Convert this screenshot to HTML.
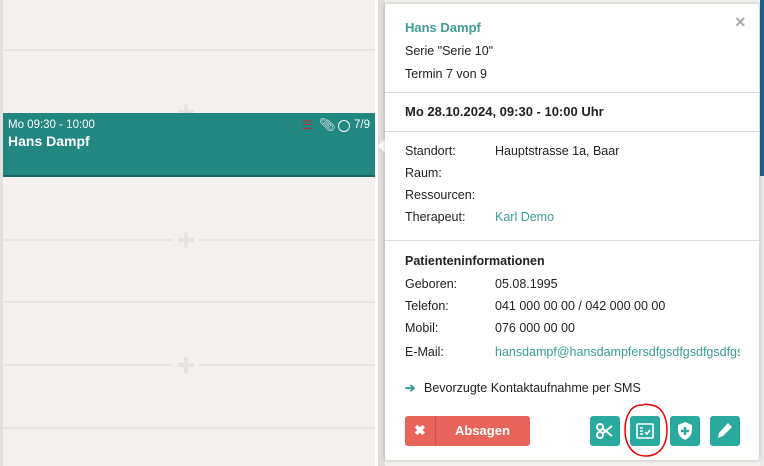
<!DOCTYPE html>
<html><head><meta charset="utf-8"><style>
*{margin:0;padding:0;box-sizing:border-box}
body{width:764px;height:466px;overflow:hidden;background:#f4f1ee;font-family:"Liberation Sans",sans-serif;font-size:12.5px;color:#222;position:relative}
.a{position:absolute}
.hl{position:absolute;left:3px;width:372px;height:2px;background:#e8e5e2}
.plus{position:absolute;width:26px;height:20px;background:#f4f1ee}
.plus:before{content:"";position:absolute;left:5px;top:8px;width:16px;height:4px;background:#e6e3e0}
.plus:after{content:"";position:absolute;left:11px;top:2px;width:4px;height:16px;background:#e6e3e0}
.pop{position:absolute;left:385px;top:4px;width:374px;height:456px;background:#fff;border-radius:3px;box-shadow:0 0 4px rgba(0,0,0,.25)}
.t{position:absolute;white-space:nowrap}
.div{position:absolute;left:0;width:374px;height:1px;background:#ddd}
.btn{position:absolute;top:412px;width:30px;height:30px;background:#2aaa9f;border-radius:3px}
.teal{color:#3a9e96}
</style></head><body>
<div class="a" style="left:0;top:0;width:3px;height:466px;background:#e2e1e0"></div>
<div class="hl" style="top:49px"></div>
<div class="hl" style="top:239px"></div>
<div class="hl" style="top:301px"></div>
<div class="hl" style="top:364px"></div>
<div class="hl" style="top:427px"></div>
<div class="plus" style="left:173px;top:230px"></div>
<div class="plus" style="left:173px;top:355px"></div>
<div class="plus" style="left:173px;top:102px"></div>
<div class="a" style="left:375px;top:0;width:3px;height:466px;background:#fff"></div>
<div class="a" style="left:378px;top:0;width:7px;height:466px;background:#dedddc"></div>
<div class="a" style="left:760px;top:0;width:4px;height:176px;background:#1f5f8a"></div>
<div class="a" style="left:760px;top:176px;width:4px;height:290px;background:#e9e9e9"></div>

<div class="a" style="left:3px;top:113px;width:372px;height:64px;background:#21877f;border-bottom:2px solid #1a6660;color:#fff">
 <div class="t" style="left:5px;top:6px;font-size:11.5px">Mo 09:30 - 10:00</div>
 <div class="t" style="left:5px;top:20px;font-size:14px;font-weight:bold">Hans Dampf</div>
 <div class="t" style="left:299px;top:5px;font-size:12px;color:#b03040">☰</div>
 <div class="t" style="left:316px;top:4px;font-size:13px;color:#e8f0ee">📎︎</div>
 <div class="t" style="left:335px;top:7px;width:12px;height:12px;border:1.5px solid #fff;border-radius:50%"></div>
 <div class="t" style="left:351px;top:6px;font-size:11.5px">7/9</div>
</div>
<div class="a" style="left:378px;top:138px;width:0;height:0;border-top:8px solid transparent;border-bottom:8px solid transparent;border-right:8px solid #fff"></div>

<div class="pop">
 <div class="t teal" style="left:20px;top:16px;font-weight:bold;font-size:13px">Hans Dampf</div>
 <div class="t" style="left:350px;top:8px;font-size:18px;color:#aaa;font-weight:bold">×</div>
 <div class="t" style="left:20px;top:40px">Serie "Serie 10"</div>
 <div class="t" style="left:20px;top:63px">Termin 7 von 9</div>
 <div class="div" style="top:88px"></div>
 <div class="t" style="left:20px;top:100px;font-weight:bold;font-size:13px">Mo 28.10.2024, 09:30 - 10:00 Uhr</div>
 <div class="div" style="top:127px"></div>
 <div class="t" style="left:20px;top:140px">Standort:</div><div class="t" style="left:110px;top:140px">Hauptstrasse 1a, Baar</div>
 <div class="t" style="left:20px;top:162px">Raum:</div>
 <div class="t" style="left:20px;top:184px">Ressourcen:</div>
 <div class="t" style="left:20px;top:206px">Therapeut:</div><div class="t teal" style="left:110px;top:206px">Karl Demo</div>
 <div class="div" style="top:236px"></div>
 <div class="t" style="left:20px;top:250px;font-weight:bold">Patienteninformationen</div>
 <div class="t" style="left:20px;top:273px">Geboren:</div><div class="t" style="left:110px;top:273px">05.08.1995</div>
 <div class="t" style="left:20px;top:295px">Telefon:</div><div class="t" style="left:110px;top:295px">041 000 00 00 / 042 000 00 00</div>
 <div class="t" style="left:20px;top:317px">Mobil:</div><div class="t" style="left:110px;top:317px">076 000 00 00</div>
 <div class="t" style="left:20px;top:341px">E-Mail:</div><div class="t teal" style="left:110px;top:341px;width:245px;overflow:hidden">hansdampf@hansdampfersdfgsdfgsdfgsdfgsdf</div>
 <div class="t teal" style="left:20px;top:376px;font-weight:bold">➔</div><div class="t" style="left:39px;top:377px">Bevorzugte Kontaktaufnahme per SMS</div>
 <div class="a" style="left:20px;top:412px;width:125px;height:30px;background:#e8645a;border-radius:3px;color:#fff;font-weight:bold">
  <div class="t" style="left:9px;top:6px;font-size:14px">✖</div>
  <div class="a" style="left:30px;top:0;width:1px;height:30px;background:#cf5248"></div>
  <div class="t" style="left:50px;top:7px;font-size:13px">Absagen</div>
 </div>
 <div class="btn" style="left:205px"><svg width="30" height="30" viewBox="0 0 30 30" fill="none" stroke="#fff" stroke-width="2"><circle cx="10" cy="11" r="3"/><circle cx="10" cy="19" r="3"/><path d="M12.5 12.5L22 20M12.5 17.5L22 10"/></svg></div>
 <div class="btn" style="left:245px"><svg width="30" height="30" viewBox="0 0 30 30" fill="none" stroke="#fff" stroke-width="1.6"><rect x="7" y="8" width="16" height="14" rx="1"/><path d="M10 12h3M10 15h3M10 18h3M15 16l2 2 3-4"/></svg></div>
 <div class="btn" style="left:285px"><svg width="30" height="30" viewBox="0 0 30 30"><path d="M15 6l7 3v5c0 5-3 8-7 10-4-2-7-5-7-10V9z" fill="#fff"/><path d="M15 11v8M11 15h8" stroke="#2aaa9f" stroke-width="2.4"/></svg></div>
 <div class="btn" style="left:325px"><svg width="30" height="30" viewBox="0 0 30 30"><path d="M18 7l4 4-9 9-5 2 1-5z" fill="#fff"/></svg></div>
 <svg class="a" style="left:236px;top:398px" width="50" height="58" viewBox="0 0 50 58" fill="none" stroke="#e00" stroke-width="1.5"><path d="M22 3C10 2 4 14 4 28c0 14 7 26 21 26 13 0 21-10 21-26C46 14 40 4 30 3c-3 0-5-2-8 0"/></svg>
</div>
</body></html>
